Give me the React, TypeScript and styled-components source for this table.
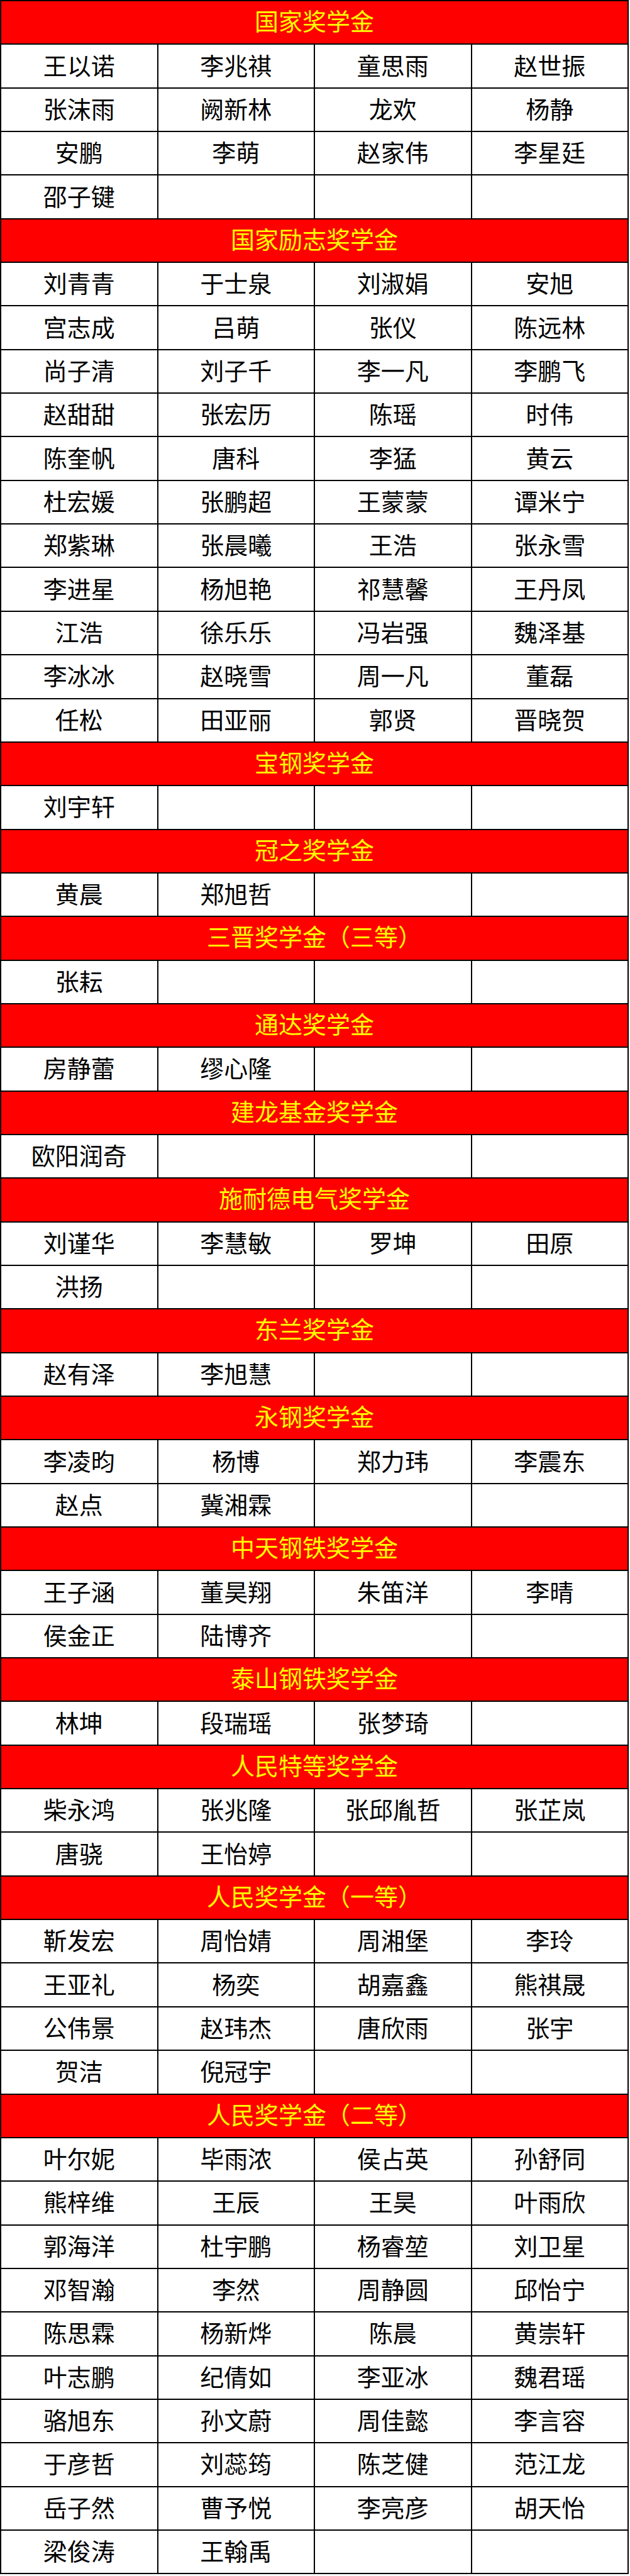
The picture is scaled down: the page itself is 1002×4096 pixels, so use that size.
import { styled, createGlobalStyle } from "styled-components";

const GlobalStyle = createGlobalStyle`
  html, body {
    margin: 0;
    padding: 0;
    background: #ffffff;
  }
  body {
    font-family: "Noto Sans CJK SC", "Noto Sans", sans-serif;
  }
`;

interface Award {
  title: string;
  names: string[];
}

// 奖学金名单
const awards: Award[] = [
  {
    title: "国家奖学金",
    names: ["王以诺", "李兆祺", "童思雨", "赵世振", "张沫雨", "阙新林", "龙欢", "杨静", "安鹏", "李萌", "赵家伟", "李星廷", "邵子键"],
  },
  {
    title: "国家励志奖学金",
    names: [
      "刘青青", "于士泉", "刘淑娟", "安旭",
      "宫志成", "吕萌", "张仪", "陈远林",
      "尚子清", "刘子千", "李一凡", "李鹏飞",
      "赵甜甜", "张宏历", "陈瑶", "时伟",
      "陈奎帆", "唐科", "李猛", "黄云",
      "杜宏媛", "张鹏超", "王蒙蒙", "谭米宁",
      "郑紫琳", "张晨曦", "王浩", "张永雪",
      "李进星", "杨旭艳", "祁慧馨", "王丹凤",
      "江浩", "徐乐乐", "冯岩强", "魏泽基",
      "李冰冰", "赵晓雪", "周一凡", "董磊",
      "任松", "田亚丽", "郭贤", "晋晓贺",
    ],
  },
  { title: "宝钢奖学金", names: ["刘宇轩"] },
  { title: "冠之奖学金", names: ["黄晨", "郑旭哲"] },
  { title: "三晋奖学金（三等）", names: ["张耘"] },
  { title: "通达奖学金", names: ["房静蕾", "缪心隆"] },
  { title: "建龙基金奖学金", names: ["欧阳润奇"] },
  { title: "施耐德电气奖学金", names: ["刘谨华", "李慧敏", "罗坤", "田原", "洪扬"] },
  { title: "东兰奖学金", names: ["赵有泽", "李旭慧"] },
  { title: "永钢奖学金", names: ["李凌昀", "杨博", "郑力玮", "李震东", "赵点", "冀湘霖"] },
  { title: "中天钢铁奖学金", names: ["王子涵", "董昊翔", "朱笛洋", "李晴", "侯金正", "陆博齐"] },
  { title: "泰山钢铁奖学金", names: ["林坤", "段瑞瑶", "张梦琦"] },
  { title: "人民特等奖学金", names: ["柴永鸿", "张兆隆", "张邱胤哲", "张芷岚", "唐骁", "王怡婷"] },
  {
    title: "人民奖学金（一等）",
    names: [
      "靳发宏", "周怡婧", "周湘堡", "李玲",
      "王亚礼", "杨奕", "胡嘉鑫", "熊祺晟",
      "公伟景", "赵玮杰", "唐欣雨", "张宇",
      "贺洁", "倪冠宇",
    ],
  },
  {
    title: "人民奖学金（二等）",
    names: [
      "叶尔妮", "毕雨浓", "侯占英", "孙舒同",
      "熊梓维", "王辰", "王昊", "叶雨欣",
      "郭海洋", "杜宇鹏", "杨睿堃", "刘卫星",
      "邓智瀚", "李然", "周静圆", "邱怡宁",
      "陈思霖", "杨新烨", "陈晨", "黄崇轩",
      "叶志鹏", "纪倩如", "李亚冰", "魏君瑶",
      "骆旭东", "孙文蔚", "周佳懿", "李言容",
      "于彦哲", "刘蕊筠", "陈芝健", "范江龙",
      "岳子然", "曹予悦", "李亮彦", "胡天怡",
      "梁俊涛", "王翰禹",
    ],
  },
];

const ROW_HEIGHT = 69.35;

const Sheet = styled.div`
  width: 1000px;
  border-top: 2px solid #000;
  border-left: 2px solid #000;
  box-sizing: border-box;
`;

const HeaderRow = styled.div`
  height: ${ROW_HEIGHT}px;
  box-sizing: border-box;
  background: #ff0000;
  border-right: 2px solid #000;
  border-bottom: 2px solid #000;
  display: flex;
  align-items: center;
  justify-content: center;
  padding-bottom: 7px;
  color: #ffff00;
  font-size: 38px;
  line-height: 1;
  white-space: nowrap;
`;

const NameRow = styled.div`
  display: grid;
  grid-template-columns: repeat(4, 1fr);
  height: ${ROW_HEIGHT}px;
`;

const Cell = styled.div`
  box-sizing: border-box;
  border-right: 2px solid #000;
  border-bottom: 2px solid #000;
  display: flex;
  align-items: center;
  justify-content: center;
  padding-bottom: 5px;
  color: #000;
  font-size: 38px;
  line-height: 1;
  white-space: nowrap;
`;

function chunk(list: string[]): string[][] {
  const rows: string[][] = [];
  for (let i = 0; i < list.length; i += 4) {
    const row = list.slice(i, i + 4);
    while (row.length < 4) row.push("");
    rows.push(row);
  }
  return rows;
}

function App() {
  return (
    <>
      <GlobalStyle />
      <Sheet>
        {awards.map((award) => (
          <section key={award.title}>
            <HeaderRow>{award.title}</HeaderRow>
            {chunk(award.names).map((row, i) => (
              <NameRow key={i}>
                {row.map((name, j) => (
                  <Cell key={j}>{name}</Cell>
                ))}
              </NameRow>
            ))}
          </section>
        ))}
      </Sheet>
    </>
  );
}

export default App;
